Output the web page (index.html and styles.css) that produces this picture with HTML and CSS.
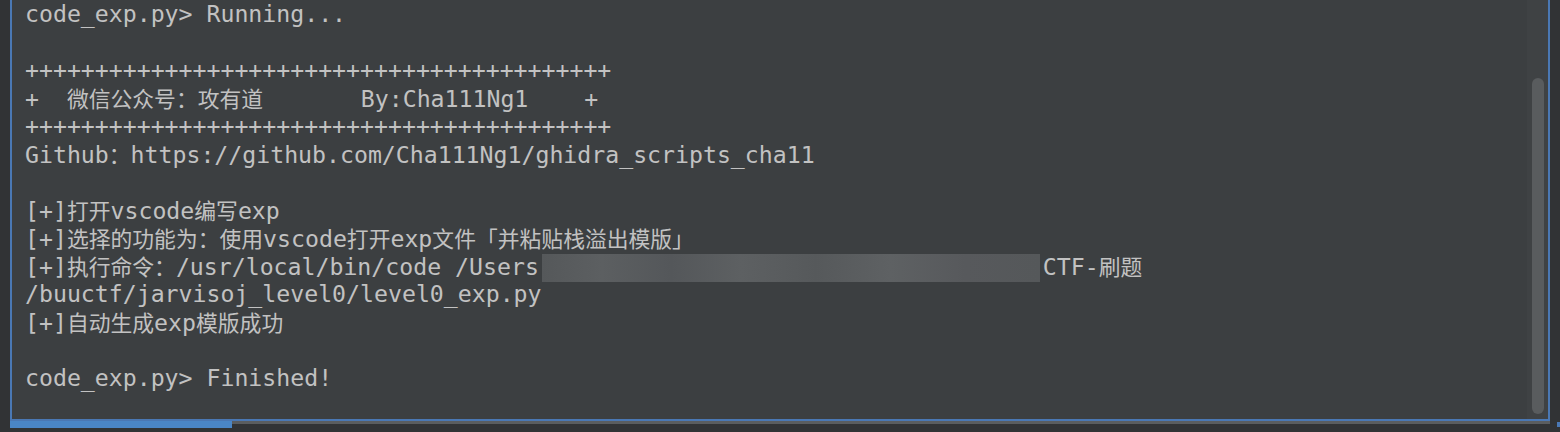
FILE: index.html
```html
<!DOCTYPE html>
<html lang="zh-CN">
<head>
<meta charset="utf-8">
<title>Console</title>
<link rel="stylesheet" href="styles.css">
</head>
<body>
<div class="screen">
  <div class="console">
    <div class="output">
      <div class="line">code_exp.py&gt; Running...</div>
      <div class="line"> </div>
      <div class="line">++++++++++++++++++++++++++++++++++++++++++</div>
      <div class="line">+  <span class="zh">微信公众号：攻有道</span>       By:Cha111Ng1    +</div>
      <div class="line">++++++++++++++++++++++++++++++++++++++++++</div>
      <div class="line">Github<span class="zh">：</span>https://github.com/Cha111Ng1/ghidra_scripts_cha11</div>
      <div class="line"> </div>
      <div class="line">[+]<span class="zh">打开</span>vscode<span class="zh">编写</span>exp</div>
      <div class="line">[+]<span class="zh">选择的功能为：使用</span>vscode<span class="zh">打开</span>exp<span class="zh">文件「并粘贴栈溢出模版」</span></div>
      <div class="line">[+]<span class="zh">执行命令：</span>/usr/local/bin/code /Users<span class="blur"></span>CTF-<span class="zh">刷题</span></div>
      <div class="line">/buuctf/jarvisoj_level0/level0_exp.py</div>
      <div class="line">[+]<span class="zh">自动生成</span>exp<span class="zh">模版成功</span></div>
      <div class="line"> </div>
      <div class="line">code_exp.py&gt; Finished!</div>
    </div>
    <div class="vscroll"><div class="vthumb"></div></div>
  </div>
  <div class="hscroll">
    <div class="hthumb"></div>
    <div class="htrack"></div>
    <div class="hcorner"></div>
  </div>
</div>
</body>
</html>
```
FILE: styles.css
```css
html, body {
  margin: 0;
  padding: 0;
  background: #313335;
  width: 1560px;
  height: 432px;
  overflow: hidden;
}

.screen {
  display: flex;
  flex-direction: column;
  width: 1560px;
  height: 432px;
}

.console {
  margin-left: 10px;
  width: 1536px;
  height: 419px;
  background: #3c3f41;
  border-left: 2px solid #4a78b4;
  border-right: 2px solid #4a78b4;
  border-bottom: 2px solid #4a78b4;
  display: flex;
  overflow: hidden;
}

.output {
  flex: 1;
  padding-left: 13px;
  font-family: "DejaVu Sans Mono", "Noto Sans CJK SC", monospace;
  font-size: 23.2px;
  line-height: 28px;
  color: #c2c2c2;
}

.line {
  height: 28px;
  white-space: pre;
}

.zh {
  font-family: "Noto Sans CJK SC", sans-serif;
  font-size: 21.8px;
}

.blur {
  display: inline-block;
  vertical-align: top;
  width: 498px;
  height: 28px;
  margin: 2px 3px 0 3px;
  background: linear-gradient(90deg, #55585a 0%, #5c5f61 12%, #54575a 26%, #5d6062 40%, #56595b 55%, #5e6163 70%, #57595c 85%, #55585a 100%);
}

.vscroll {
  width: 21px;
  background: #3f4244;
  padding-top: 78px;
  padding-bottom: 5px;
  display: flex;
  justify-content: center;
}

.vthumb {
  width: 12px;
  height: 336px;
  border-radius: 6px;
  background: #595c5e;
}

.hscroll {
  margin-left: 10px;
  display: flex;
  align-items: flex-start;
  height: 7px;
}

.hthumb {
  width: 222px;
  height: 7px;
  background: #4a86c6;
}

.htrack {
  width: 1318px;
  height: 3px;
  background: #5a5d5f;
}

.hcorner {
  margin-left: 7px;
  margin-top: 1px;
  width: 3px;
  height: 5px;
  background: #4a78b4;
}
```
